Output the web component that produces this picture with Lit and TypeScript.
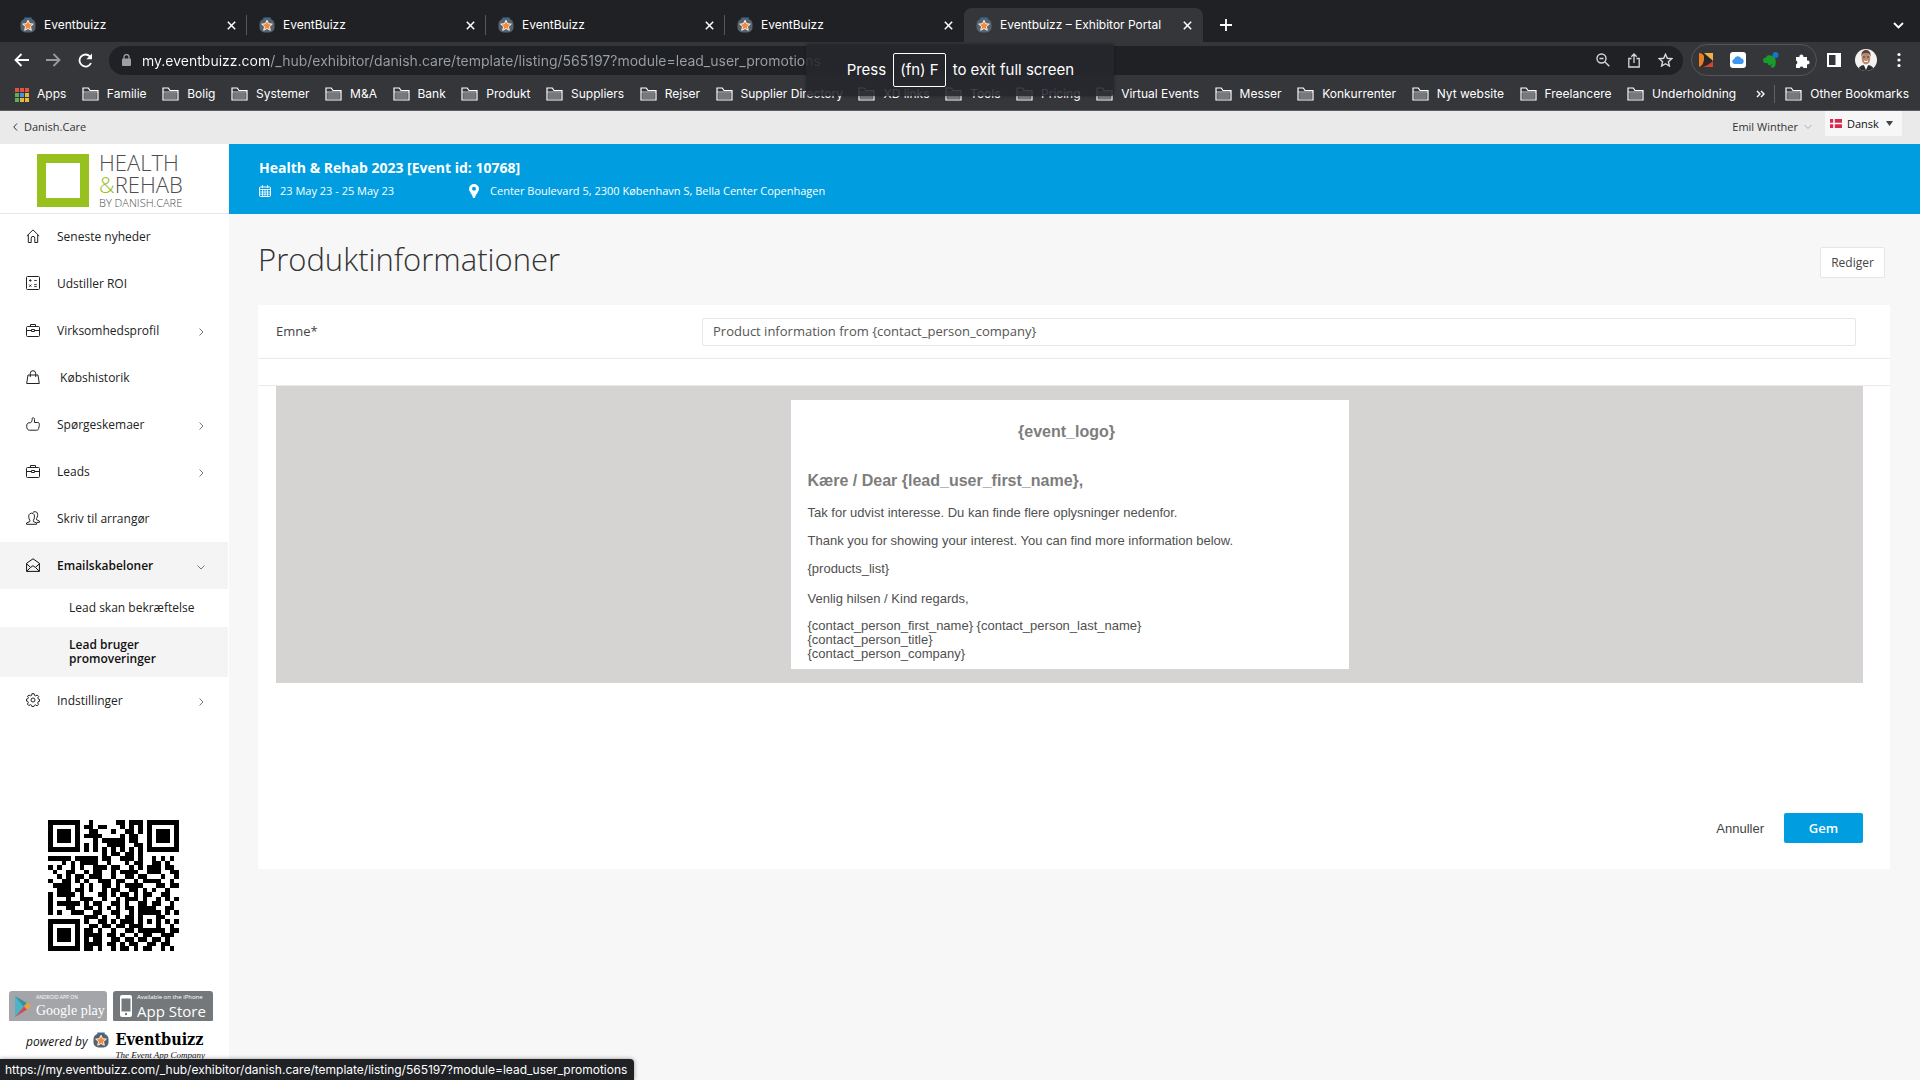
import { LitElement, html, css, svg, nothing } from "lit";
import { customElement } from "lit/decorators.js";
import { classMap } from "lit/directives/class-map.js";

const URL_TEXT = "my.eventbuizz.com/_hub/exhibitor/danish.care/template/listing/565197?module=lead_user_promotions";

const TABS = [
  { title: "Eventbuizz", active: false },
  { title: "EventBuizz", active: false },
  { title: "EventBuizz", active: false },
  { title: "EventBuizz", active: false },
  { title: "Eventbuizz – Exhibitor Portal", active: true },
];

const BOOKMARKS = [
  "Familie", "Bolig", "Systemer", "M&A", "Bank", "Produkt", "Suppliers", "Rejser", "Supplier Directory",
  "XD links", "Tools", "Pricing", "Virtual Events", "Messer", "Konkurrenter", "Nyt website", "Freelancere",
  "Underholdning",
];

const stroke = (body: unknown, size = 14) => html`<svg class="ico" width=${size} height=${size} viewBox="0 0 14 14"
  fill="none" stroke="currentColor" stroke-width="1" aria-hidden="true">${body}</svg>`;

const ICONS: Record<string, unknown> = {
  home: svg`<path d="M.8 7 7 .9 13.2 7M2.3 6v7.5h2.9V9.2a1.8 1.8 0 0 1 3.6 0v4.3h2.9V6"/>`,
  roi: svg`<rect x=".5" y=".5" width="13" height="13" rx="1"/><path d="M3 4.500h2.600M4.300 3.200v2.600M8.200 4.500h2.600M3.200 8.600l2.200 2.200M5.400 8.600 3.200 10.800M8.200 8.600h2.600M8.200 10.600h2.600" stroke-width=".9"/>`,
  briefcase: svg`<rect x=".5" y="3.500" width="13" height="10" rx="1"/><path d="M4.500 3.200V1.500h5v1.700M.5 7.500h5M8.500 7.500h5M5.500 6.500h3v2h-3z"/>`,
  bag: svg`<path d="M2 5h10l1.300 8.500H.7zM4.300 7V3.400a2.700 2.700 0 0 1 5.400 0V7"/>`,
  thumb: svg`<path d="M.7 9.200c0-2 .8-3.400 2.200-3.400h1.600C6 4.600 6.300 3 6.200 1.500c0-1.300 2.300-1 2.300 1v3h3.300c1.600 0 1.700 1.500 1.500 3l-.6 2.800c-.2 1.200-.8 1.900-2 1.900H3.400C1.500 13.200.7 11.500.7 9.200z"/>`,
  users: svg`<path d="M.6 13.300v-1.400l3.200-1.300V9.300C2.600 7.800 2.500 5 3.100 3.600c.8-1.900 4.200-1.900 5 0 .6 1.400.5 4.200-.7 5.700v1.300l3.200 1.300v1.400zM6.700 1.900C7.600.2 10.600.3 11.300 2c.6 1.500.4 4-.8 5.500v1.200l2.900 1.300v1.400h-2.600"/>`,
  mail: svg`<path d="M.6 5.300 7 .8l6.400 4.500v8.100H.6zM.6 5.800l4 3.600M13.400 5.800l-4 3.600M.8 13.200 4.600 9.400 7 7.700l2.400 1.700 3.800 3.800"/>`,
  gear: svg`<circle cx="7" cy="7" r="2"/><path d="M5.900.7h2.200l.4 1.700 1.200.5 1.500-.9L12.700 3.500l-.9 1.400.5 1.200 1.200.3v1.900l-1.400.5-.4 1.100.8 1.500-1.500 1.400-1.400-.9-1.300.5-.4 1.100H5.900l-.4-1.300-1.200-.5-1.500.9L1.400 11l.9-1.400-.5-1.200-1.300-.3V6.100l1.400-.4.5-1.100-.9-1.400L3 2l1.400.8 1.200-.4z"/>`,
};

const MENU_TOP = [
  { icon: "home", label: "Seneste nyheder" },
  { icon: "roi", label: "Udstiller ROI" },
  { icon: "briefcase", label: "Virksomhedsprofil", arrow: "right" },
  { icon: "bag", label: "\u00a0Købshistorik" },
  { icon: "thumb", label: "Spørgeskemaer", arrow: "right" },
  { icon: "briefcase", label: "Leads", arrow: "right" },
  { icon: "users", label: "Skriv til arrangør" },
  {
    icon: "mail", label: "Emailskabeloner", arrow: "down", active: true,
    children: [
      { label: "Lead skan bekræftelse", active: false },
      { label: "Lead bruger promoveringer", active: true },
    ],
  },
  { icon: "gear", label: "Indstillinger", arrow: "right" },
];

const QR = [
  "#######..#.....##.###.#######",
  "#.....#.##.##...#.#.#.#.....#",
  "#.###.#..##...#..##.#.#.###.#",
  "#.###.#.####....#.##..#.###.#",
  "#.###.#...#.#####.##..#.###.#",
  "#.....#.#.#..####..##.#.....#",
  "#######.#.#.#.#.#.#.#.#######",
  "............#.##.##.#........",
  "#####.#####.##..###.#..#.#.#.",
  "...#.#.####..#...#.##..##.#..",
  "#.#..#.#..###.##..#.#.###.##.",
  ".#..##..#.##..#.####..###..##",
  "..#.#.##.###..#..##.##...#..#",
  "#..##.#.#..###.##..#.####..#.",
  ".####..#.#..##.#.####...##.##",
  "..###.##.#..#.##..##.#.#..#..",
  "#.####.#...##.#.##.#.##..##..",
  "#...#..###..#..#.###.#..#.#.#",
  "#.#####.#.##..##.#..##.##..#.",
  "#...##..##.#.#.#.##.####..##.",
  "#.#..###..##..##..#.#####.#.#",
  "........###.#..#.##.#...##...",
  "#######.#..##.#.###.#.#.#.#.#",
  "#.....#..##.##.##.###...#..#.",
  "#.###.#.##.#..#..##.######.##",
  "#.###.#.####.##.#..#.##..###.",
  "#.###.#.#.##..##.##.##.##.#..",
  "#.....#.####.##.#.##..##.##..",
  "#######.##.#..#.##.#.##..#.#.",
];

const favicon = (size: number) => html`<svg width=${size} height=${size} viewBox="0 0 16 16" aria-hidden="true">
  <path d="M5 2.500V1.200h6v1.300" fill="none" stroke="#3d6b96" stroke-width="1.400"/>
  <rect x=".5" y="2" width="15" height="13.500" rx="5" fill="#56626d"/>
  <path d="m8 3.300 1.600 3.400 3.700.4-2.800 2.500.8 3.700L8 11.500l-3.300 1.800.8-3.700L2.700 7.100l3.700-.4z" fill="#f08a3c" stroke="#fff" stroke-width=".9"/>
</svg>`;

const folder = html`<svg width="17" height="14" viewBox="0 0 17 14" aria-hidden="true">
  <path d="M1 13V1h5.300l1.700 2.500h8V13z" fill="none" stroke="#fff" stroke-width="1.200"/>
  <path d="M2.200 6h12.600v6H2.200z" fill="#77787b"/><path d="M1 5h15" fill="none" stroke="#fff" stroke-width=".8"/>
</svg>`;

const cross = html`<svg width="9" height="9" viewBox="0 0 9 9" stroke="currentColor" stroke-width="1.500" aria-hidden="true"><path d="m.8.8 7.400 7.400M8.200.8.8 8.200"/></svg>`;

@customElement("browser-chrome")
export class BrowserChrome extends LitElement {
  static styles = css`
    :host { display: block; background: #35363a; color: #fff; font-family: Inter, "Liberation Sans", sans-serif; font-size: 12px; }
    button, input { font: inherit; color: inherit; background: none; border: 0; padding: 0; margin: 0; }
    button { display: inline-flex; align-items: center; justify-content: center; }
    svg { flex: none; display: block; }
    .tabs { display: flex; align-items: flex-end; height: 42px; background: #202124; padding-left: 8px; box-sizing: border-box; }
    .tab { display: flex; align-items: center; gap: 8px; width: 239px; height: 34px; padding: 0 11px 0 12px; box-sizing: border-box; border-radius: 8px 8px 0 0; position: relative; }
    .tab.active { background: #35363a; }
    .tab.line::after { content: ""; position: absolute; right: 0; top: 7px; width: 1px; height: 20px; background: #56575b; }
    .tab .title { flex: 1; line-height: 18px; white-space: nowrap; }
    .plus { width: 12px; height: 34px; margin-left: 17px; }
    .more { margin-left: auto; width: 12px; height: 34px; margin-right: 16px; }
    .toolbar { display: flex; align-items: center; height: 36px; padding: 0 13px 0 12px; }
    .nav { display: flex; gap: 18px; width: 97px; padding-left: 2px; box-sizing: border-box; }
    .nav button { width: 14px; }
    .dim { opacity: .5; }
    .omni { flex: 1; display: flex; align-items: center; gap: 11px; height: 29px; background: #202124; border-radius: 15px; padding: 0 10px 0 13px; margin-right: 8px; box-sizing: border-box; }
    .url { flex: 1; min-width: 0; height: 28px; font-size: 14px; color: transparent; background: linear-gradient(to right, #ffffff 128px, #9aa0a6 128px); -webkit-background-clip: text; background-clip: text; outline: 0; }
    .omni-actions { display: flex; gap: 18px; color: #d5d7da; }
    .ext { display: flex; align-items: center; gap: 16px; height: 32px; border: 1px solid #55565a; border-radius: 17px; padding: 0 6px; margin-right: 10px; box-sizing: border-box; }
    .tail { display: flex; align-items: center; gap: 14px; }
    .marks { display: flex; align-items: center; height: 33px; padding: 0 11px 0 15px; border-bottom: 1px solid #5e5d61; box-sizing: border-box; white-space: nowrap; }
    .list { flex: 1; display: flex; justify-content: space-between; }
    .mark { display: flex; align-items: center; gap: 8px; color: #fff; text-decoration: none; line-height: 18px; }
    .last { margin-left: 9px; padding-left: 10px; border-left: 1px solid #5f6064; }
    .chev { margin-left: 20px; }
  `;

  render() {
    return html`
      <div class="tabs">
        ${TABS.map((t, i) => html`<div class=${classMap({ tab: true, active: t.active, line: i < 3 })}>
          ${favicon(16)}<span class="title">${t.title}</span><button aria-label="Close tab">${cross}</button>
        </div>`)}
        <button class="plus" aria-label="New tab"><svg width="12" height="12" viewBox="0 0 12 12" stroke="#fff" stroke-width="1.800"><path d="M6 0v12M0 6h12"/></svg></button>
        <button class="more" aria-label="Search tabs"><svg width="11" height="7" viewBox="0 0 11 7" fill="none" stroke="#fff" stroke-width="1.800"><path d="m1 1 4.500 4.500L10 1"/></svg></button>
      </div>
      <div class="toolbar">
        <div class="nav">
          <button aria-label="Back"><svg width="15" height="14" viewBox="0 0 15 14" fill="none" stroke="#fff" stroke-width="1.800"><path d="M15 7H1.500M7.500 1l-6 6 6 6"/></svg></button>
          <button aria-label="Forward" class="dim"><svg width="15" height="14" viewBox="0 0 15 14" fill="none" stroke="#fff" stroke-width="1.800"><path d="M0 7h13.500M7.500 1l6 6-6 6"/></svg></button>
          <button aria-label="Reload"><svg width="15" height="15" viewBox="0 0 15 15" fill="none" stroke="#fff" stroke-width="1.800"><path d="M13 10A6 6 0 1 1 12 3.500l1.300 1.600"/><path d="M14 .6v5.600H8.400z" fill="#fff" stroke="none"/></svg></button>
        </div>
        <div class="omni">
          <svg width="9" height="12" viewBox="0 0 9 12"><rect y="4.500" width="9" height="7.500" rx="1" fill="#9aa0a6"/><path d="M2 5V3a2.500 2.500 0 0 1 5 0v2" fill="none" stroke="#9aa0a6" stroke-width="1.300"/></svg>
          <input class="url" type="text" aria-label="Address" .value=${URL_TEXT} />
          <div class="omni-actions">
            <button aria-label="Zoom"><svg width="14" height="14" viewBox="0 0 14 14" fill="none" stroke="currentColor" stroke-width="1.400"><circle cx="5.500" cy="5.500" r="4.500"/><path d="m9 9 4.300 4.300M3.500 5.500h4"/></svg></button>
            <button aria-label="Share"><svg width="12" height="15" viewBox="0 0 12 15" fill="none" stroke="currentColor" stroke-width="1.300"><path d="M3.500 5.500H.8v8.500h10.400V5.500H8.500M6 10V1.200M3.300 3.700 6 1l2.700 2.700"/></svg></button>
            <button aria-label="Bookmark"><svg width="15" height="14" viewBox="0 0 15 14" fill="none" stroke="currentColor" stroke-width="1.400"><path d="m7.500 1.200 1.800 4.100 4.500.4-3.400 3 1 4.300-3.900-2.300L3.600 13l1-4.300-3.400-3 4.500-.4z"/></svg></button>
          </div>
        </div>
        <div class="ext">
          <svg width="16" height="16" viewBox="0 0 16 16"><path d="M1 1h14v14H1z" fill="#2b2629"/><path d="M6 1h9v8z" fill="#eeb04a"/><path d="M1 1c4 0 6 3 5 7s-2 6-5 7z" fill="#ef7d22"/><path d="M2 15c5 0 8-2 13-6v6z" fill="#d8432f"/><path d="M6 3v9l8-4z" fill="#24262b"/></svg>
          <svg width="16" height="16" viewBox="0 0 16 16"><rect width="16" height="16" rx="3" fill="#fff"/><path d="M4.500 12a2.600 2.600 0 0 1-.3-5.100 3.700 3.700 0 0 1 6.900-.6A3 3 0 0 1 12 12z" fill="#3f96f2"/></svg>
          <svg width="17" height="16" viewBox="0 0 17 16"><path d="M1 8c0-1.500 1-2 3-2.500C5 3 7 3 8.500 3.500 11 4 13 5 13.500 7.500c.6 3 .2 5.500-1 7.500-2 1.300-4 .7-3.700-1 .2-1.500 1.700-1.500 2.200-.8-.2-1.500-2-1.200-2.500 0-2 .3-2.500-.5-2.500-2C3 11.500 1 11 1 8z" fill="#1a9c2d"/><circle cx="13.500" cy="3" r="3" fill="#1676c9"/></svg>
          <svg width="15" height="15" viewBox="0 0 15 15"><path d="M1 4h3.500a2 2 0 1 1 3.800 0H12v3.500a2 2 0 1 1 0 3.800V15H8.500a2 2 0 0 0-3.800 0H1v-3.600a2 2 0 0 0 0-3.800z" fill="#fff"/></svg>
        </div>
        <div class="tail">
          <svg width="14" height="14" viewBox="0 0 14 14"><path d="M1 1h12v12H1z" fill="none" stroke="#fff" stroke-width="2"/><path d="M8.500 1H13v12H8.500z" fill="#fff"/></svg>
          <svg width="22" height="22" viewBox="0 0 22 22"><clipPath id="face"><circle cx="11" cy="11" r="11"/></clipPath><g clip-path="url(#face)"><path d="M0 0h22v22H0z" fill="#f4f2ef"/><path d="M3 22c0-5 4-6 8-6s8 1 8 6z" fill="#2c2d33"/><path d="m8.500 15 2.500 6 2.500-6z" fill="#fff"/><ellipse cx="11" cy="9.500" rx="4.300" ry="6" fill="#b98a70"/><path d="M6.500 8C6 3 8 1 11 1s5 2 4.500 7C15 5.500 14 4 11 4S7 5.500 6.500 8z" fill="#5a4538"/><path d="M8 8h2M12 8h2" stroke="#4a352b"/><path d="M9 12q2 1.500 4 0" stroke="#fff" fill="none"/></g></svg>
          <button aria-label="Menu"><svg width="16" height="16" viewBox="0 0 16 16" fill="#fff"><circle cx="8" cy="2.500" r="1.600"/><circle cx="8" cy="8" r="1.600"/><circle cx="8" cy="13.500" r="1.600"/></svg></button>
        </div>
      </div>
      <nav class="marks" aria-label="Bookmarks">
        <div class="list">
          <a class="mark" href="#"><svg width="14" height="15" viewBox="0 0 14 15">
            ${["#e25241", "#e25241", "#e25241", "#5fae55", "#4d8fe0", "#e9b838", "#5fae55", "#e9b838", "#e9b838"].map((c, i) =>
              svg`<rect x=${(i % 3) * 5} y=${1 + Math.floor(i / 3) * 5} width="4" height="4" fill=${c}></rect>`)}
          </svg>Apps</a>
          ${BOOKMARKS.map((b) => html`<a class="mark" href="#">${folder}${b}</a>`)}
        </div>
        <button class="chev" aria-label="More bookmarks"><svg width="9" height="8" viewBox="0 0 9 8" fill="none" stroke="#fff" stroke-width="1.400"><path d="m1 1 3 3-3 3M5 1l3 3-3 3"/></svg></button>
        <a class="mark last" href="#">${folder}Other Bookmarks</a>
      </nav>
    `;
  }
}

@customElement("side-bar")
export class SideBar extends LitElement {
  static styles = css`
    :host { display: flex; flex-direction: column; background: #fff; color: #222; font-size: 12px; }
    .logo { display: flex; gap: 10px; height: 70px; padding: 10px 0 0 37px; box-sizing: border-box; border-bottom: 1px solid #e6e6e6; color: #4d4d4d; }
    .box { flex: none; width: 52px; height: 53px; border: 9px solid #96c11f; box-sizing: border-box; }
    .words { display: flex; flex-direction: column; margin-top: -3px; font-weight: 300; }
    .big { font-size: 22px; line-height: 22px; }
    .amp { color: #96c11f; }
    .small { font-size: 11px; line-height: 16px; white-space: nowrap; }
    ul { list-style: none; margin: 0; padding: 0; }
    a { display: flex; align-items: center; color: inherit; text-decoration: none; box-sizing: border-box; margin-right: 1px; }
    .menu { margin-top: -1px; }
    .item { gap: 17px; height: 47px; padding: 0 23px 1px 26px; }
    .item .label { flex: 1; }
    .active { background: #f4f4f4; font-weight: 600; color: #111; }
    .arrow { margin-top: 4px; color: #777; }
    .sub { min-height: 38px; padding: 10px 64px 10px 69px; line-height: 14px; }
    .sub.wide { padding-right: 30px; }
    .sub.active { min-height: 50px; }
    .qr { display: block; width: 131px; height: 131px; margin: 96px 0 0 48px; }
    .stores { display: flex; gap: 6px; margin: 40px 16px 0 9px; }
    .badge { display: flex; align-items: center; height: 30px; margin: 0; border-radius: 3px 3px 1px 1px; color: #fff; flex: 1; min-width: 0; white-space: nowrap; gap: 4px; }
    .play { background: #a3a5a8; padding-left: 5px; font-family: "Liberation Serif", serif; }
    .apple { background: #75787b; padding-left: 7px; gap: 5px; }
    .badge span { display: flex; flex-direction: column; }
    .tiny { font-size: 6px; line-height: 9px; font-style: normal; }
    .play .tiny { font-size: 5px; font-family: "Open Sans", sans-serif; }
    .name { font-size: 15px; line-height: 18px; font-weight: 400; }
    .play .name { font-size: 14px; }
    .powered { display: flex; margin: 9px 0 0 26px; gap: 6px; align-items: flex-start; font-style: italic; color: #111; }
    .powered .by { line-height: 24px; }
    .brand { display: flex; flex-direction: column; }
    .brand b { font: bold 16px/20px "DejaVu Serif Condensed", "DejaVu Serif", serif; color: #000; }
    .brand i { font: italic 9px/10px "Liberation Serif", serif; white-space: nowrap; }
    .powered svg { margin-top: 2px; }
  `;

  private arrow(dir?: string) {
    if (!dir) return nothing;
    return dir === "right"
      ? html`<svg class="arrow" width="8" height="8" viewBox="0 0 8 8" fill="none" stroke="currentColor"><path d="m2.500 .5 3.500 3.500-3.500 3.500"/></svg>`
      : html`<svg class="arrow" width="8" height="8" viewBox="0 0 8 8" fill="none" stroke="currentColor"><path d="m.5 2.500 3.500 3.500 3.500-3.500"/></svg>`;
  }

  render() {
    return html`
      <div class="logo"><div class="box"></div><div class="words">
        <span class="big">HEALTH</span><span class="big"><span class="amp">&amp;</span>REHAB</span><span class="small">BY DANISH.CARE</span>
      </div></div>
      <ul class="menu">
        ${MENU_TOP.map((m) => html`<li>
          <a href="#" class=${classMap({ item: true, active: !!m.active })}>${stroke(ICONS[m.icon])}<span class="label">${m.label}</span>${this.arrow(m.arrow)}</a>
          ${m.children ? html`<ul>${m.children.map((c) => html`<li><a href="#" class=${classMap({ sub: true, active: c.active, wide: !c.active })}>${c.label}</a></li>`)}</ul>` : nothing}
        </li>`)}
      </ul>
      <svg class="qr" viewBox="0 0 29 29" shape-rendering="crispEdges" role="img" aria-label="QR">
        ${QR.map((row, y) => [...row].map((c, x) => (c === "#" ? svg`<rect x=${x} y=${y} width="1" height="1"></rect>` : nothing)))}
      </svg>
      <div class="stores">
        <a class="badge play" href="#">
          <svg width="18" height="23" viewBox="0 0 18 23"><path d="M1 1v21l9-10.500z" fill="#48b5c9"/><path d="m1 1 12 7-3.500 3.500z" fill="#3c8e9b"/><path d="m13 8 4.500 3-4.500 3.500-3-3z" fill="#e8a33d"/><path d="M1 22 13 14.500l-3-3z" fill="#cf4a55"/></svg>
          <span><em class="tiny">ANDROID APP ON</em><b class="name">Google play</b></span>
        </a>
        <a class="badge apple" href="#">
          <svg width="12" height="22" viewBox="0 0 12 22"><rect width="12" height="22" rx="2" fill="#fff"/><path d="M1.500 3.500h9v13h-9z" fill="#75787b"/><circle cx="6" cy="19" r="1.200" fill="#75787b"/></svg>
          <span><em class="tiny">Available on the iPhone</em><b class="name">App Store</b></span>
        </a>
      </div>
      <div class="powered"><span class="by">powered by</span>${favicon(16)}<span class="brand"><b>Eventbuizz</b><i>The Event App Company</i></span></div>
    `;
  }
}

@customElement("template-page")
export class TemplatePage extends LitElement {
  static styles = css`
    :host { display: block; flex: 1; min-width: 0; color: #444; font-size: 13px; }
    button, input { font: inherit; color: inherit; box-sizing: border-box; }
    .event { height: 70px; background: #009de0; color: #fff; padding: 14px 30px 0; box-sizing: border-box; }
    .event h2 { margin: 0; font-size: 14px; line-height: 20px; font-weight: 700; }
    .facts { display: flex; align-items: center; margin-top: 5px; font-size: 11px; line-height: 16px; font-weight: 400; }
    .facts span { margin-left: 9px; }
    .pin { margin-left: 75px; }
    .facts .pin + span { margin-left: 11px; }
    .head { display: flex; align-items: flex-start; justify-content: space-between; padding: 25px 35px 0 29px; height: 91px; box-sizing: border-box; }
    h1 { margin: 0; font-size: 31px; line-height: 40px; font-weight: 300; color: #333; }
    .edit { width: 65px; height: 31px; margin-top: 8px; padding: 0; background: #fff; border: 1px solid #e6e6e6; border-radius: 2px; font-size: 12px; }
    .card { background: #fff; margin: 0 30px 40px 29px; }
    .row { display: grid; grid-template-columns: 426px 1fr; align-items: center; height: 54px; padding: 0 34px 0 18px; border-bottom: 1px solid #ebebeb; box-sizing: border-box; }
    .row label { padding-bottom: 2px; }
    .row input { height: 28px; border: 1px solid #e6e6e6; border-radius: 2px; background: #fff; padding: 0 10px 2px; width: 100%; color: #555; }
    .spacer { height: 27px; border-bottom: 1px solid #ebebeb; box-sizing: border-box; }
    .canvas { margin: 0 27px 0 18px; padding: 14px 0; background: #d5d4d3; }
    .mail { width: 558px; height: 269px; margin: 0 auto; background: #fff; padding: 22px 17px 0; box-sizing: border-box; font: 13px/14px "Liberation Sans", Arial, sans-serif; color: #505050; }
    .mail h3 { margin: 0; font-size: 16px; line-height: 20px; color: #7d7d7d; }
    .mail h3.logo { text-align: center; padding-right: 6px; margin-bottom: 29px; }
    .mail p { margin: 14px 0 0; }
    .mail .sign { margin: 16px 0 -1px; }
    .mail .first { margin-top: 15px; }
    .actions { display: flex; justify-content: flex-end; align-items: center; gap: 20px; margin-top: 130px; padding: 0 27px 26px; }
    .cancel { border: 0; background: none; padding: 0; font: 13px "Liberation Sans", Arial, sans-serif; }
    .save { width: 79px; height: 30px; border: 0; border-radius: 2px; background: #009de0; color: #fff; font-size: 13px; font-weight: 600; padding: 0; }
  `;

  render() {
    return html`
      <header class="event">
        <h2>Health &amp; Rehab 2023 [Event id: 10768]</h2>
        <div class="facts">
          <svg width="12" height="12" viewBox="0 0 12 12" fill="none" stroke="#fff"><rect x=".5" y="2" width="11" height="9.500" rx="1"/><path d="M3.500 0v3M8.500 0v3M1 4.500h10M1 7h10M1 9.200h10M3.500 4v7M6 4v7M8.500 4v7" stroke-width=".8"/></svg>
          <span>23 May 23 - 25 May 23</span>
          <svg class="pin" width="10" height="14" viewBox="0 0 10 14"><path d="M5 0a5 5 0 0 1 5 5c0 3-3.500 5-4 9H4C3.500 10 0 8 0 5a5 5 0 0 1 5-5zm0 2.800a2 2 0 1 0 0 4 2 2 0 0 0 0-4z" fill="#fff" fill-rule="evenodd"/></svg>
          <span>Center Boulevard 5, 2300 København S, Bella Center Copenhagen</span>
        </div>
      </header>
      <div class="head"><h1>Produktinformationer</h1><button class="edit">Rediger</button></div>
      <section class="card">
        <div class="row"><label for="subject">Emne*</label><input id="subject" type="text" .value=${"Product information from {contact_person_company}"} /></div>
        <div class="spacer"></div>
        <div class="canvas"><article class="mail">
          <h3 class="logo">{event_logo}</h3>
          <h3>Kære / Dear {lead_user_first_name},</h3>
          <p class="first">Tak for udvist interesse. Du kan finde flere oplysninger nedenfor.</p>
          <p>Thank you for showing your interest. You can find more information below.</p>
          <p>{products_list}</p>
          <p class="sign">Venlig hilsen / Kind regards,</p>
          <p>{contact_person_first_name} {contact_person_last_name}<br />{contact_person_title}<br />{contact_person_company}</p>
        </article></div>
        <div class="actions"><button class="cancel">Annuller</button><button class="save">Gem</button></div>
      </section>
    `;
  }
}

@customElement("app-root")
export class AppRoot extends LitElement {
  static styles = css`
    :host { display: flex; flex-direction: column; height: 100vh; overflow: hidden; position: relative; background: #f7f7f7; font-family: "Open Sans", "Noto Sans", sans-serif; }
    .top { display: flex; flex: none; height: 33px; background: #eaeaea; color: #333; font-size: 11px; line-height: 16px; padding: 0 18px 0 13px; font-weight: 500; box-sizing: border-box; }
    .back { display: flex; align-items: center; gap: 6px; height: 31px; color: inherit; text-decoration: none; }
    .user { margin-left: auto; height: 31px; display: flex; align-items: center; gap: 6px; border: 0; background: none; font: inherit; color: inherit; padding: 0; }
    .lang { display: flex; align-items: center; gap: 5px; height: 25px; margin-left: 13px; padding: 0 9px 0 5px; background: #f7f7f7; }
    select { appearance: none; border: 0; background: none; font: inherit; color: #111; padding: 0; width: 34px; }
    .body { display: flex; flex: 1; min-height: 0; }
    side-bar { width: 229px; flex: none; }
    .notice { position: absolute; left: 42%; top: 44px; width: 308px; height: 52px; display: flex; align-items: center; justify-content: center; gap: 7px; background: rgba(38, 39, 44, .88); color: #fff; font: 400 15px/18px Inter, sans-serif; border-radius: 3px; white-space: nowrap; box-shadow: 0 0 3px rgba(0, 0, 0, .35); }
    .notice kbd { font: inherit; border: 1px solid #fff; border-radius: 2px; padding: 7px 6px; }
    .status { position: absolute; left: 0; bottom: 0; height: 21px; background: #202124; color: #fff; font: 12px/21px Inter, sans-serif; padding: 0 7px 0 5px; border-radius: 0 4px 0 0; white-space: nowrap; box-shadow: 0 0 4px rgba(0, 0, 0, .4); }
  `;

  render() {
    return html`
      <browser-chrome></browser-chrome>
      <div class="top">
        <a class="back" href="#"><svg width="5" height="8" viewBox="0 0 5 8" fill="none" stroke="#333"><path d="M4 .5.8 4 4 7.500"/></svg>Danish.Care</a>
        <button class="user">Emil Winther<svg width="8" height="6" viewBox="0 0 8 6" fill="none" stroke="#aaa"><path d="m.5 1 3.500 3.500L7.500 1"/></svg></button>
        <div class="lang">
          <svg width="12" height="9" viewBox="0 0 12 9"><path d="M0 0h12v9H0z" fill="#d52b4c"/><path d="M4 0v9M0 4.500h12" stroke="#fff" stroke-width="1.500"/></svg>
          <select aria-label="Language"><option>Dansk</option></select>
          <svg width="7" height="5" viewBox="0 0 7 5"><path d="M0 0h7L3.500 5z" fill="#444"/></svg>
        </div>
      </div>
      <div class="body"><side-bar></side-bar><template-page></template-page></div>
      <div class="notice"><span>Press</span><kbd>(fn) F</kbd><span>to exit full screen</span></div>
      <div class="status">https://${URL_TEXT}</div>
    `;
  }
}
